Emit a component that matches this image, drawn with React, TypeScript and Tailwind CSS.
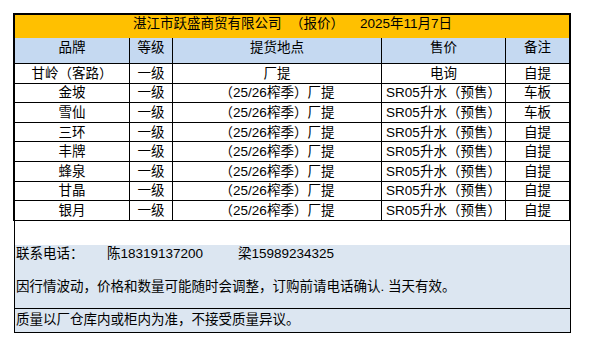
const rows = [
  ['甘岭（客路）', '一级', '厂提', '电询', '自提'],
  ['金坡', '一级', '（25/26榨季）厂提', 'SR05升水（预售）', '车板'],
  ['雪仙', '一级', '（25/26榨季）厂提', 'SR05升水（预售）', '车板'],
  ['三环', '一级', '（25/26榨季）厂提', 'SR05升水（预售）', '自提'],
  ['丰牌', '一级', '（25/26榨季）厂提', 'SR05升水（预售）', '自提'],
  ['蜂泉', '一级', '（25/26榨季）厂提', 'SR05升水（预售）', '自提'],
  ['甘晶', '一级', '（25/26榨季）厂提', 'SR05升水（预售）', '自提'],
  ['银月', '一级', '（25/26榨季）厂提', 'SR05升水（预售）', '自提'],
]

const cols = 'grid grid-cols-[114px_43px_209px_124px_64px]'

export default function App() {
  return (
    <div className="w-[593px] h-[350px] bg-white pt-[13px] font-['Liberation_Sans','Noto_Sans_CJK_SC',sans-serif] text-[13.5px] text-black">
      {/* price table */}
      <div className="ml-[13px] w-[558px] border-l-2 border-r-2 border-t-2 border-black">
        {/* title */}
        <div className="h-[23px] bg-[#ffc000] flex items-center pb-[7px] pl-[118px] leading-[17px] whitespace-nowrap">
          <span className="w-[157px]">湛江市跃盛商贸有限公司</span>
          <span className="w-[70px]">（报价）</span>
          <span>2025年11月7日</span>
        </div>

        {/* header */}
        <div className={`${cols} h-[26px] bg-[#c5d9f1] border-b border-black`}>
          {['品牌', '等级', '提货地点', '售价', '备注'].map((h, i) => (
            <div
              key={h}
              className={`flex items-center justify-center pb-[5px] ${i > 0 ? 'border-l border-black' : ''}`}
            >
              {h}
            </div>
          ))}
        </div>

        {rows.map((r, ri) => (
          <div key={ri} className={`${cols} h-[19.6px] border-b border-black`}>
            {r.map((c, i) => (
              <div
                key={i}
                className={`flex items-center justify-center leading-[17px] whitespace-nowrap ${i > 0 ? 'border-l border-black' : ''}`}
              >
                {c}
              </div>
            ))}
          </div>
        ))}
      </div>

      {/* notes */}
      <div className="ml-[14px] w-[557px] border-l border-r border-b border-black">
        <div className="h-[24px]" />
        <div className="h-[63px] bg-[#dce6f1] pl-[1px] leading-[17px]">
          <div className="flex whitespace-nowrap">
            <span className="w-[91px]">联系电话：</span>
            <span className="w-[131px]">陈18319137200</span>
            <span>梁15989234325</span>
          </div>
          <div className="mt-[16px] whitespace-nowrap">
            因行情波动，价格和数量可能随时会调整，订购前请电话确认. 当天有效。
          </div>
        </div>
        <div className="h-[24px] bg-[#dce6f1] border-t border-black pl-[1px] flex items-center leading-[17px] pb-[1px]">
          质量以厂仓库内或柜内为准，不接受质量异议。
        </div>
      </div>
    </div>
  )
}
